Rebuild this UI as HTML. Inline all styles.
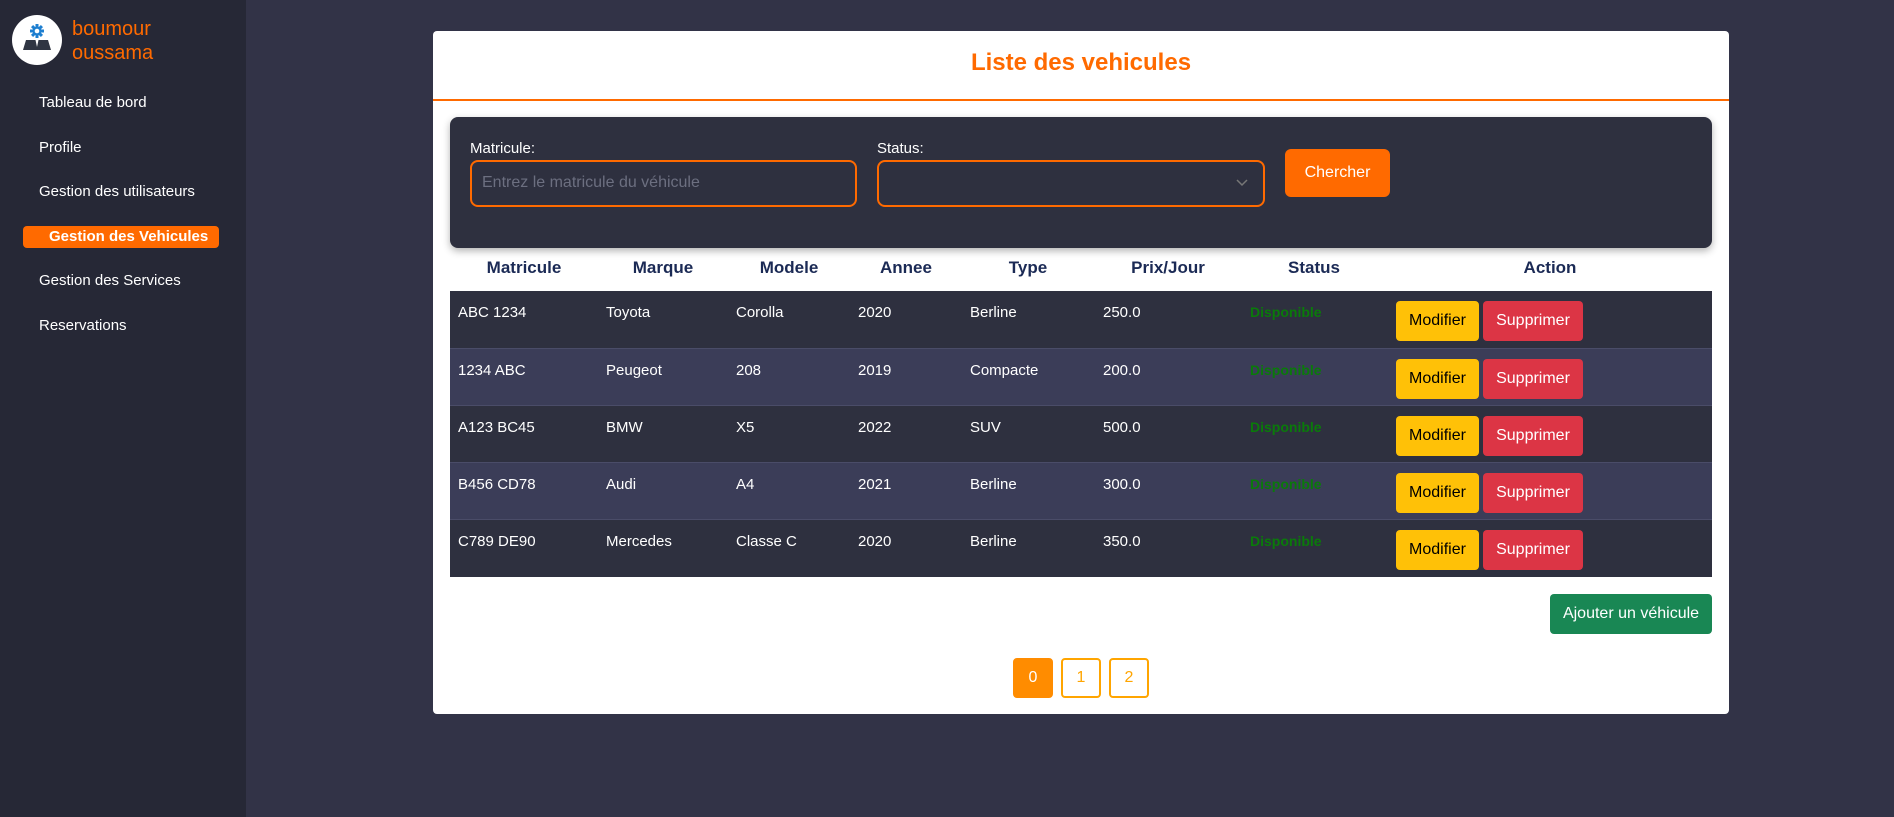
<!DOCTYPE html>
<html><head><meta charset="utf-8"><style>
*{box-sizing:border-box;margin:0;padding:0}
body{width:1894px;height:817px;background:#323347;font-family:"Liberation Sans",Arial,sans-serif;position:relative;overflow:hidden}
.a{position:absolute}
#side{left:0;top:0;width:246px;height:817px;background:#262836}
.nav{position:absolute;left:39px;color:#fff;font-size:15px;line-height:18px}
#card{left:433px;top:31px;width:1296px;height:683px;background:#fff;border-radius:4px}
.lbl{color:#fff;font-size:15px}
.inp{border:2px solid #ff6a00;border-radius:8px;background:#2e303f}
.h{position:absolute;top:258px;font-weight:bold;font-size:17px;color:#1b2a55;transform:translateX(-50%)}
.row{position:absolute;left:450px;width:1262px;height:57px}
.c{position:absolute;top:13px;color:#fff;font-size:15px}
.d{position:absolute;top:13px;left:800px;color:#0a7a0a;font-weight:bold;font-size:14px}
.m{position:absolute;top:10px;left:946px;width:83px;height:40px;background:#ffc107;border-radius:4px;color:#000;font-size:16px;text-align:center;line-height:40px}
.s{position:absolute;top:10px;left:1033px;width:100px;height:40px;background:#dc3545;border-radius:4px;color:#fff;font-size:16px;text-align:center;line-height:40px}
.pg{position:absolute;top:658px;width:40px;height:40px;border:2px solid #ffa500;border-radius:4px;color:#ffa500;font-size:16px;text-align:center;line-height:36px;background:#fff}
</style></head><body>
<div id="side" class="a">
  <div class="a" style="left:12px;top:15px;width:50px;height:50px;border-radius:50%;background:#fff">
    <svg width="50" height="50" viewBox="0 0 50 50">
      <g fill="#1e7fd0"><rect x="23.5" y="9" width="3" height="14"/><rect x="18" y="14.5" width="14" height="3"/><rect x="23.5" y="9" width="3" height="14" transform="rotate(45 25 16)"/><rect x="23.5" y="9" width="3" height="14" transform="rotate(-45 25 16)"/></g>
      <circle cx="25" cy="16" r="4.5" fill="#1e7fd0"/>
      <circle cx="25" cy="16" r="2.3" fill="#fff"/>
      <path d="M11 35 L14 25 L36 25 L39 35 Z" fill="#2f3542"/>
      <path d="M23.5 25 L25 32 L26.5 25 Z" fill="#fff"/>
    </svg>
  </div>
  <div class="a" style="left:72px;top:17px;color:#ff6a00;font-size:20px;line-height:24px">boumour<br>oussama</div>
  <div class="nav" style="top:94px">Tableau de bord</div>
  <div class="nav" style="top:139px">Profile</div>
  <div class="nav" style="top:183px">Gestion des utilisateurs</div>
  <div class="a" style="left:23px;top:226px;width:196px;height:22px;background:#ff6a00;border-radius:4px;color:#fff;font-weight:bold;font-size:15px;line-height:22px;padding-left:26px">Gestion des Vehicules</div>
  <div class="nav" style="top:272px">Gestion des Services</div>
  <div class="nav" style="top:317px">Reservations</div>
</div>
<div id="card" class="a"></div>
<div class="a" style="left:433px;top:49px;width:1296px;text-align:center;color:#ff6a00;font-weight:bold;font-size:24px">Liste des vehicules</div>
<div class="a" style="left:433px;top:99px;width:1296px;height:2px;background:#ff6a00"></div>
<div class="a" style="left:450px;top:117px;width:1262px;height:131px;background:#2e303f;border-radius:8px;box-shadow:0 3px 8px rgba(0,0,0,.3)"></div>
<div class="a lbl" style="left:470px;top:140px">Matricule:</div>
<div class="a inp" style="left:470px;top:160px;width:387px;height:47px"></div>
<div class="a" style="left:482px;top:174px;color:#6c6f80;font-size:16px">Entrez le matricule du véhicule</div>
<div class="a lbl" style="left:877px;top:140px">Status:</div>
<div class="a inp" style="left:877px;top:160px;width:388px;height:47px"></div>
<svg class="a" style="left:1236px;top:179px" width="12" height="8"><path d="M1 1 L6 6 L11 1" fill="none" stroke="#777" stroke-width="1.5"/></svg>
<div class="a" style="left:1285px;top:149px;width:105px;height:48px;background:#ff6a00;border-radius:6px;color:#fff;font-size:16px;text-align:center;line-height:48px">Chercher</div>

<div class="h" style="left:524px">Matricule</div>
<div class="h" style="left:663px">Marque</div>
<div class="h" style="left:789px">Modele</div>
<div class="h" style="left:906px">Annee</div>
<div class="h" style="left:1028px">Type</div>
<div class="h" style="left:1168px">Prix/Jour</div>
<div class="h" style="left:1314px">Status</div>
<div class="h" style="left:1550px">Action</div>

<div class="row" style="top:291px;background:#2e303f"><div class="c" style="left:8px">ABC 1234</div><div class="c" style="left:156px">Toyota</div><div class="c" style="left:286px">Corolla</div><div class="c" style="left:408px">2020</div><div class="c" style="left:520px">Berline</div><div class="c" style="left:653px">250.0</div><div class="d">Disponible</div><div class="m">Modifier</div><div class="s">Supprimer</div></div>
<div class="row" style="top:348px;background:#3b3d58;border-top:1px solid #4a4c68"><div class="c" style="left:8px">1234 ABC</div><div class="c" style="left:156px">Peugeot</div><div class="c" style="left:286px">208</div><div class="c" style="left:408px">2019</div><div class="c" style="left:520px">Compacte</div><div class="c" style="left:653px">200.0</div><div class="d">Disponible</div><div class="m">Modifier</div><div class="s">Supprimer</div></div>
<div class="row" style="top:405px;background:#2e303f;border-top:1px solid #4a4c68"><div class="c" style="left:8px">A123 BC45</div><div class="c" style="left:156px">BMW</div><div class="c" style="left:286px">X5</div><div class="c" style="left:408px">2022</div><div class="c" style="left:520px">SUV</div><div class="c" style="left:653px">500.0</div><div class="d">Disponible</div><div class="m">Modifier</div><div class="s">Supprimer</div></div>
<div class="row" style="top:462px;background:#3b3d58;border-top:1px solid #4a4c68"><div class="c" style="left:8px">B456 CD78</div><div class="c" style="left:156px">Audi</div><div class="c" style="left:286px">A4</div><div class="c" style="left:408px">2021</div><div class="c" style="left:520px">Berline</div><div class="c" style="left:653px">300.0</div><div class="d">Disponible</div><div class="m">Modifier</div><div class="s">Supprimer</div></div>
<div class="row" style="top:519px;height:58px;background:#2e303f;border-top:1px solid #4a4c68"><div class="c" style="left:8px">C789 DE90</div><div class="c" style="left:156px">Mercedes</div><div class="c" style="left:286px">Classe C</div><div class="c" style="left:408px">2020</div><div class="c" style="left:520px">Berline</div><div class="c" style="left:653px">350.0</div><div class="d">Disponible</div><div class="m">Modifier</div><div class="s">Supprimer</div></div>

<div class="a" style="left:1550px;top:594px;width:162px;height:40px;background:#198754;border-radius:4px;color:#fff;font-size:16px;text-align:center;line-height:40px">Ajouter un véhicule</div>
<div class="pg" style="left:1013px;background:#ff8c00;border-color:#ff8c00;color:#fff">0</div>
<div class="pg" style="left:1061px">1</div>
<div class="pg" style="left:1109px">2</div>
</body></html>
